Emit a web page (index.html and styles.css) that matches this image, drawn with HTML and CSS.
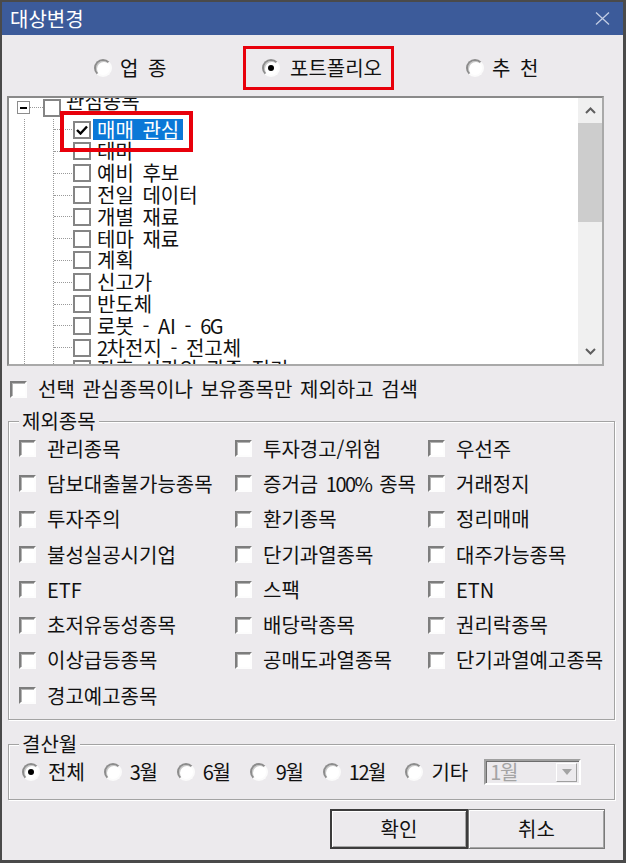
FILE: index.html
```html
<!DOCTYPE html>
<html lang="ko">
<head>
<meta charset="utf-8">
<title>대상변경</title>
<link rel="stylesheet" href="styles.css">
</head>
<body>
<div class="window">
  <div class="titlebar">
    <span class="title">대상변경</span>
    <svg class="close" width="15" height="13" viewBox="0 0 15 13"><path d="M1 0.5 L14 12.5 M14 0.5 L1 12.5" stroke="#c3cde4" stroke-width="1.3" fill="none"/></svg>
  </div>
  <div class="body">
    <div class="type-row">
      <label class="opt opt-1"><span class="radio"></span><span>업 종</span></label>
      <label class="opt opt-2"><span class="radio on"></span><span>포트폴리오</span></label>
      <label class="opt opt-3"><span class="radio"></span><span>추 천</span></label>
    </div>

    <div class="tree">
      <div class="tree-view">
        <div class="root-row">
          <span class="expander"></span><span class="hline"></span><span class="tcb"></span><span class="tlabel root-label">관심종목</span>
        </div>
        <div class="level0">
          <ul class="children">
            <li class="node"><span class="tcb"><svg width="12" height="10" viewBox="0 0 12 10"><path d="M1 5 L4.5 8.5 L11 1.5" stroke="#000" stroke-width="2.4" fill="none"/></svg></span><span class="tlabel sel">매매 관심</span></li>
            <li class="node"><span class="tcb"></span><span class="tlabel">테마</span></li>
            <li class="node"><span class="tcb"></span><span class="tlabel">예비 후보</span></li>
            <li class="node"><span class="tcb"></span><span class="tlabel">전일 데이터</span></li>
            <li class="node"><span class="tcb"></span><span class="tlabel">개별 재료</span></li>
            <li class="node"><span class="tcb"></span><span class="tlabel">테마 재료</span></li>
            <li class="node"><span class="tcb"></span><span class="tlabel">계획</span></li>
            <li class="node"><span class="tcb"></span><span class="tlabel">신고가</span></li>
            <li class="node"><span class="tcb"></span><span class="tlabel">반도체</span></li>
            <li class="node"><span class="tcb"></span><span class="tlabel">로봇 - AI - <span class="num">6</span>G</span></li>
            <li class="node"><span class="tcb"></span><span class="tlabel"><span class="num">2</span>차전지 - 전고체</span></li>
            <li class="node"><span class="tcb"></span><span class="tlabel">장후 시간외 관종 정리</span></li>
            <li class="node"><span class="tcb"></span><span class="tlabel">기타</span></li>
          </ul>
        </div>
        <div class="callout"></div>
      </div>
      <div class="scrollbar">
        <div class="sb-btn"><svg width="11" height="7" viewBox="0 0 11 7"><path d="M1 6 L5.5 1.5 L10 6" stroke="#5f5f5f" stroke-width="2" fill="none"/></svg></div>
        <div class="thumb"></div>
        <div class="sb-track"></div>
        <div class="sb-btn"><svg width="11" height="7" viewBox="0 0 11 7"><path d="M1 1 L5.5 5.5 L10 1" stroke="#5f5f5f" stroke-width="2" fill="none"/></svg></div>
      </div>
    </div>

    <label class="only"><span class="cb"></span><span>선택 관심종목이나 보유종목만 제외하고 검색</span></label>

    <fieldset class="group">
      <legend>제외종목</legend>
      <div class="checks">
        <label class="check"><span class="cb"></span><span>관리종목</span></label>
        <label class="check"><span class="cb"></span><span>투자경고/위험</span></label>
        <label class="check"><span class="cb"></span><span>우선주</span></label>
        <label class="check"><span class="cb"></span><span>담보대출불가능종목</span></label>
        <label class="check"><span class="cb"></span><span>증거금 <span class="num">100%</span> 종목</span></label>
        <label class="check"><span class="cb"></span><span>거래정지</span></label>
        <label class="check"><span class="cb"></span><span>투자주의</span></label>
        <label class="check"><span class="cb"></span><span>환기종목</span></label>
        <label class="check"><span class="cb"></span><span>정리매매</span></label>
        <label class="check"><span class="cb"></span><span>불성실공시기업</span></label>
        <label class="check"><span class="cb"></span><span>단기과열종목</span></label>
        <label class="check"><span class="cb"></span><span>대주가능종목</span></label>
        <label class="check"><span class="cb"></span><span>ETF</span></label>
        <label class="check"><span class="cb"></span><span>스팩</span></label>
        <label class="check"><span class="cb"></span><span>ETN</span></label>
        <label class="check"><span class="cb"></span><span>초저유동성종목</span></label>
        <label class="check"><span class="cb"></span><span>배당락종목</span></label>
        <label class="check"><span class="cb"></span><span>권리락종목</span></label>
        <label class="check"><span class="cb"></span><span>이상급등종목</span></label>
        <label class="check"><span class="cb"></span><span>공매도과열종목</span></label>
        <label class="check"><span class="cb"></span><span>단기과열예고종목</span></label>
        <label class="check"><span class="cb"></span><span>경고예고종목</span></label>
      </div>
    </fieldset>

    <fieldset class="group settle">
      <legend>결산월</legend>
      <div class="months">
        <label class="month"><span class="radio on"></span><span>전체</span></label>
        <label class="month"><span class="radio"></span><span><span class="num">3</span>월</span></label>
        <label class="month"><span class="radio"></span><span><span class="num">6</span>월</span></label>
        <label class="month"><span class="radio"></span><span><span class="num">9</span>월</span></label>
        <label class="month"><span class="radio"></span><span><span class="num">12</span>월</span></label>
        <label class="month"><span class="radio"></span><span>기타</span></label>
        <div class="combo"><span><span class="num">1</span>월</span><span class="combo-btn"><svg width="10" height="6" viewBox="0 0 10 6"><path d="M0 0 H10 L5 6 Z" fill="#a3a3a3"/></svg></span></div>
      </div>
    </fieldset>

    <div class="actions">
      <button class="btn default">확인</button>
      <button class="btn cancel">취소</button>
    </div>
  </div>
</div>
</body>
</html>
```

FILE: styles.css
```css
body {
  margin: 0;
  font-family: "Noto Sans CJK KR", "Noto Sans", sans-serif;
  font-size: 20px;
  line-height: 20px;
  color: #111;
  word-spacing: 2px;
}

.num { letter-spacing: -1.5px; }

.window {
  width: 626px;
  height: 863px;
  box-sizing: border-box;
  border: 2px solid #4a4a4a;
  border-right-width: 3px;
  border-bottom-width: 3px;
  background: #eceaed;
  display: flex;
  flex-direction: column;
}

.titlebar {
  height: 33px;
  flex: none;
  background: #3c5b9a;
  color: #fff;
  display: flex;
  align-items: center;
  justify-content: space-between;
  padding: 0 13px 0 8px;
}

.type-row {
  display: flex;
  align-items: center;
  height: 44px;
  padding: 11px 0 0 92px;
  margin-bottom: 6px;
  word-spacing: 4px;
}

.opt {
  display: flex;
  align-items: center;
  gap: 8px;
}
.opt-1 { width: 149px; }
.opt-2 {
  box-sizing: border-box;
  width: 151px;
  height: 44px;
  border: 3px solid #e8000b;
  padding-left: 16px;
  gap: 10px;
}
.opt-3 { margin-left: 72px; }

.radio {
  flex: none;
  position: relative;
  width: 18px;
  height: 18px;
  box-sizing: border-box;
  border-radius: 50%;
  border: 2px solid;
  border-color: #8c8c8c #fbfbfb #fbfbfb #8c8c8c;
  box-shadow: inset 1px 1px 0 #c8c8c8;
  background: #fff;
}
.radio.on::after {
  content: "";
  position: absolute;
  left: 4px;
  top: 4px;
  width: 6px;
  height: 6px;
  border-radius: 50%;
  background: #000;
}

/* tree */
.tree {
  margin-left: 5px;
  width: 597px;
  height: 270px;
  flex: none;
  box-sizing: border-box;
  border: 2px solid;
  border-color: #8a8a8a #a9a9a9 #a9a9a9 #8a8a8a;
  background: #fff;
  display: flex;
}

.tree-view {
  flex: 1;
  overflow: hidden;
  position: relative;
  word-spacing: 3px;
}

.root-row {
  height: 21.8px;
  margin-top: -1px;
  display: flex;
  align-items: center;
}

.expander {
  flex: none;
  margin-left: 8px;
  width: 13px;
  height: 13px;
  box-sizing: border-box;
  border: 1px solid #8c8c8c;
  background: linear-gradient(#000, #000) center / 7px 2px no-repeat, #fff;
}

.hline {
  width: 13px;
  border-top: 1px dotted #9a9a9a;
}

.tcb {
  flex: none;
  width: 18px;
  height: 18px;
  box-sizing: border-box;
  border: 2px solid #858585;
  background: #fff;
  display: flex;
  align-items: center;
  justify-content: center;
}

.tlabel {
  margin-left: 5px;
  white-space: nowrap;
}
.root-label { margin-bottom: 14px; }

.level0 {
  margin-left: 15px;
  border-left: 1px dotted #9a9a9a;
}

.children {
  list-style: none;
  margin: 0 0 0 28px;
  padding: 0;
  border-left: 1px dotted #9a9a9a;
}

.node {
  height: 21.8px;
  display: flex;
  align-items: center;
}
.node::before {
  content: "";
  width: 18px;
  margin-right: 1px;
  border-top: 1px dotted #9a9a9a;
}
.node .tlabel { margin-left: 6px; }
.node .tlabel.sel {
  margin-left: 2px;
  padding: 0 4px;
  line-height: 21px;
  background: #0a78d7;
  color: #fff;
}

.callout {
  position: absolute;
  left: 51px;
  top: 13px;
  width: 133px;
  height: 41px;
  box-sizing: border-box;
  border: 4px solid #e8000b;
}

.scrollbar {
  width: 24px;
  flex: none;
  background: #f0f0f0;
  display: flex;
  flex-direction: column;
}
.sb-btn {
  height: 25px;
  display: flex;
  align-items: center;
  justify-content: center;
}
.thumb {
  height: 99px;
  background: #cdcdcd;
}
.sb-track { flex: 1; }

/* classic checkbox */
.cb {
  flex: none;
  width: 17px;
  height: 17px;
  box-sizing: border-box;
  border: 2px solid;
  border-color: #7d7d7d #fdfdfd #fdfdfd #7d7d7d;
  box-shadow: inset 1px 1px 0 #b4b4b4;
  background: #fff;
}

.only {
  display: flex;
  align-items: center;
  gap: 11px;
  height: 24px;
  margin: 11px 0 0 8px;
}

.group {
  margin: 10px 0 0 6px;
  width: 607px;
  min-width: 0;
  box-sizing: border-box;
  border: 1px solid #a3a3a3;
  box-shadow: 1px 1px 0 #fff, inset 1px 1px 0 #fff;
  padding: 0 0 6px 10px;
}
.group legend {
  padding: 0 3px;
  margin-left: 0;
  line-height: 20px;
  background: #eceaed;
}

.checks {
  display: grid;
  grid-template-columns: 216px 193px 1fr;
  grid-auto-rows: 35.3px;
  align-items: center;
}
.check {
  display: flex;
  align-items: center;
  gap: 11px;
  white-space: nowrap;
}

.group.settle {
  margin-top: 14px;
  padding-bottom: 9px;
}

.months {
  display: flex;
  align-items: center;
  height: 36px;
  padding-left: 3px;
  gap: 19px;
}
.month {
  display: flex;
  align-items: center;
  gap: 8px;
}

.combo {
  margin-left: -3px;
  width: 97px;
  height: 26px;
  box-sizing: border-box;
  border: 2px solid;
  border-color: #a0a0a0 #fff #fff #a0a0a0;
  box-shadow: inset 1px 1px 0 #6d6d6d;
  display: flex;
  align-items: center;
  justify-content: space-between;
  padding: 0 2px 0 4px;
  color: #a4a4a4;
}
.combo-btn {
  width: 21px;
  height: 19px;
  box-sizing: border-box;
  border: 1px solid;
  border-color: #fff #a0a0a0 #a0a0a0 #fff;
  display: flex;
  align-items: center;
  justify-content: center;
}

.actions {
  display: flex;
  justify-content: flex-end;
  margin: 9px 18px 0 0;
}
.btn {
  height: 40px;
  box-sizing: border-box;
  background: #eceaed;
  border: 1px solid #7a7a7a;
  box-shadow: inset 1px 1px 0 #fff, inset -1px -1px 0 #a5a5a5;
  font: inherit;
  color: #111;
  padding: 0;
}
.btn.default {
  width: 138px;
  border: 2px solid #3c3c3c;
}
.btn.cancel { width: 137px; }
```
